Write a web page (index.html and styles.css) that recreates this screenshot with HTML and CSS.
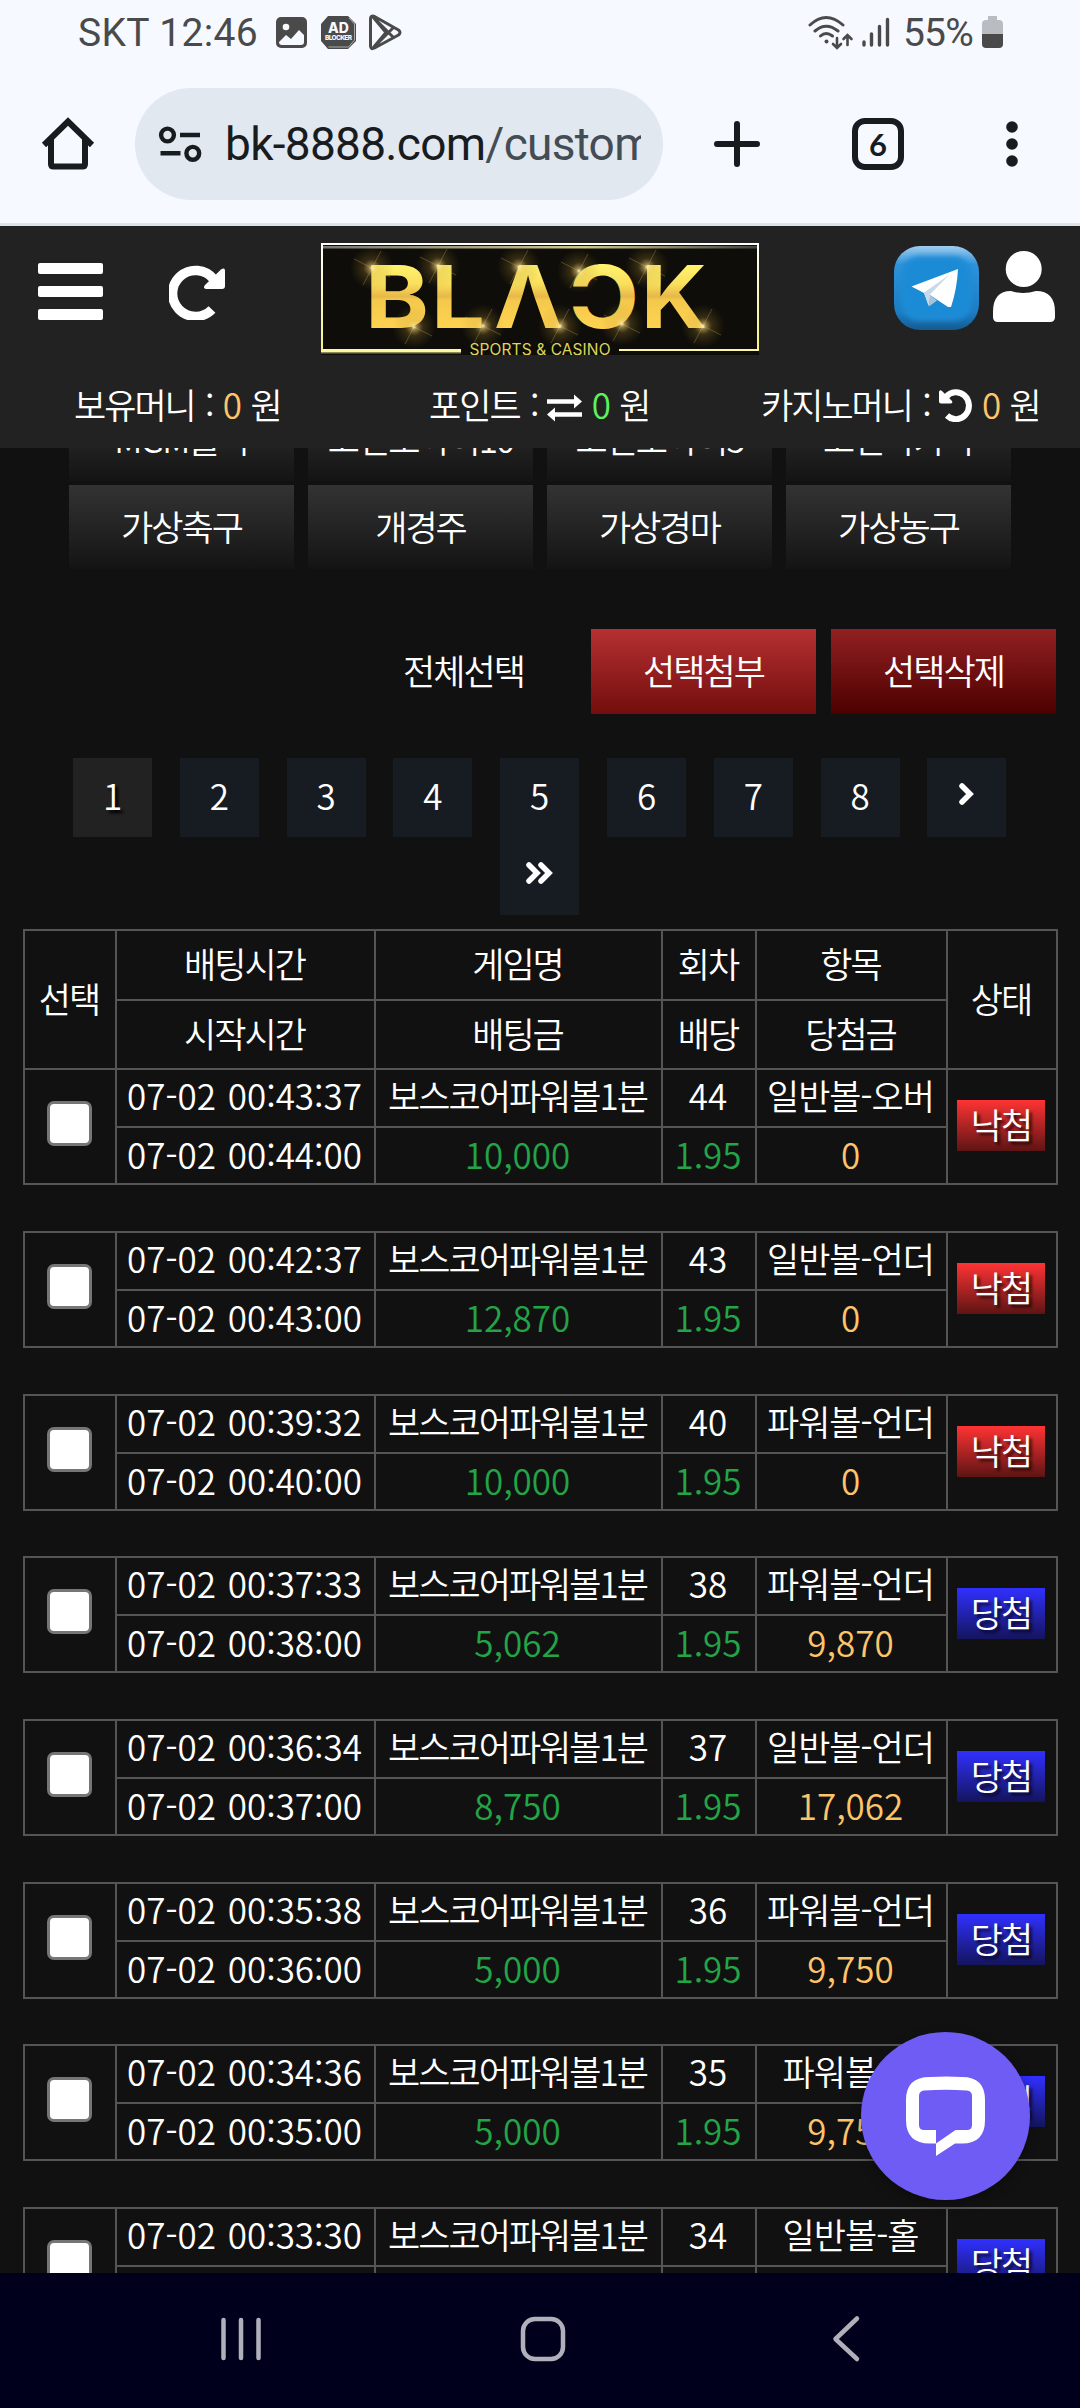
FILE: index.html
```html
<!DOCTYPE html>
<html lang="ko">
	<head>
		<meta charset="utf-8">
		<title>BLACK</title>
		<link rel="stylesheet" href="styles.css">
	</head>
	<body>
		<div class="status">
			<span class="carrier">SKT 12:46</span>
			<svg class="st-left" width="128" height="38" viewBox="275 14 128 38">
				<rect x="276" y="17" width="31" height="31" rx="5" fill="#4a4a4a"/>
				<circle cx="286" cy="27" r="3.3" fill="#f6f9ff"/>
				<path d="M279 42l7-7 5 4 8-9 5 5v7q0 3-3 3h-19q-3 0-3-3z" fill="#f6f9ff"/>
				<path d="M328 16h20l8 8v17l-8 8h-20l-7-8V24z" fill="#4a4a4a"/>
				<path d="M349 18l5.500 6v16l-6 7h-20" fill="none" stroke="#aaa" stroke-width="1"/>
				<text x="338.500" y="32.500" class="ad">AD</text>
				<text x="338.500" y="40" class="adb" textLength="27">BLOCKER</text>
				<path d="M370.500 19v27q0 4 4 2l24-13q3-2.500 0-5l-24-13.500q-4-1.500-4 2.500zM373 17l20 20M373 48l20-20M373 17l13 15.500L373 48" fill="none" stroke="#4a4a4a" stroke-width="3" stroke-linejoin="round"/>
			</svg>
			<svg class="st-right" width="84" height="38" viewBox="807 14 84 38" fill="none" stroke="#4a4a4a" stroke-width="3" stroke-linecap="round">
				<path d="M810 25Q826 10 843 25M815 31Q826 21.500 838 31M820.500 36Q826 31 832.500 36"/>
				<circle cx="826.500" cy="41.500" r="2" fill="#4a4a4a" stroke="none"/>
				<path d="M837 38v9.500M833 44l4 4 4-4M847.500 45v-9.500M843.500 39l4-4 4 4" stroke-width="2.600"/>
				<path d="M864 42v3M871.500 34v11M879.500 26.500V45M887.500 19.500V45" stroke-width="3.400"/>
			</svg>
			<span class="pct">55%</span>
			<svg class="batt" width="21" height="32" viewBox="0 0 21 32">
				<path d="M6 0h9v4h2q4 0 4 4v10H0V8q0-4 4-4h2z" fill="#b9bcc1"/>
				<path d="M0 18h21v10q0 4-4 4H4q-4 0-4-4z" fill="#4a4a4a"/>
			</svg>
		</div>
		<div class="toolbar">
			<svg class="home" width="54" height="54" viewBox="41 117 54 54" fill="none" stroke="#181c1f" stroke-width="6">
				<path d="M44 145l24-23.500L92 145" stroke-linejoin="miter"/>
				<path d="M51 139v25q0 2.500 2.500 2.500h29q2.500 0 2.500-2.500v-25"/>
			</svg>
			<div class="omnibox">
				<svg width="44" height="38" viewBox="158 125 44 38" fill="none" stroke="#181c1f" stroke-width="4.400">
					<circle cx="167.500" cy="135" r="6.400"/>
					<circle cx="192.800" cy="153.300" r="6.400"/>
					<path d="M180 135h20M160.500 153.300h20"/>
				</svg>
				<div class="url">bk-8888.com<span>/custom</span></div>
			</div>
			<svg class="plus" width="46" height="46" viewBox="0 0 46 46" stroke="#181c1f" stroke-width="6" stroke-linecap="round">
				<path d="M23 3v40M3 23h40"/>
			</svg>
			<div class="tabcount">6</div>
			<svg class="dots" width="12" height="46" viewBox="0 0 12 46" fill="#181c1f">
				<circle cx="6" cy="6" r="5.800"/><circle cx="6" cy="23" r="5.800"/><circle cx="6" cy="40" r="5.800"/>
			</svg>
		</div>

		<div class="header">
			<div class="top">
				<div class="burger"><i></i><i></i><i></i></div>
				<svg class="reload" width="56" height="56" viewBox="169 264 56 56">
					<path d="M212 309.500A23 23 0 1 1 213.500 279" fill="none" stroke="#fff" stroke-width="9.500"/>
					<path d="M221 269.500q4-2.500 4 1.500V286q0 3-3 3h-16q-3.500-.5-1-4z" fill="#fff"/>
				</svg>
				<svg class="logo" width="438" height="112" viewBox="321 243 438 112">
					<defs>
						<linearGradient id="gold" x1="0" y1="265" x2="0" y2="328" gradientUnits="userSpaceOnUse">
							<stop offset="0" stop-color="#fff36e"/>
							<stop offset=".3" stop-color="#f9df5c"/>
							<stop offset=".5" stop-color="#e8b848"/>
							<stop offset=".56" stop-color="#f4c94c"/>
							<stop offset="1" stop-color="#ffd350"/>
						</linearGradient>
						<linearGradient id="frame" x1="0" y1="0" x2="0" y2="1">
							<stop offset="0" stop-color="#fff"/>
							<stop offset="1" stop-color="#f7f07e"/>
						</linearGradient>
						<linearGradient id="sheen" x1="0" x2="1">
							<stop offset="0" stop-color="#777"/>
							<stop offset=".6" stop-color="#cfc98a"/>
							<stop offset="1" stop-color="#444"/>
						</linearGradient>
						<radialGradient id="glow">
							<stop offset="0" stop-color="#fffbe0"/>
							<stop offset=".12" stop-color="#f5d97a" stop-opacity=".6"/>
							<stop offset=".4" stop-color="#c9a03c" stop-opacity=".22"/>
							<stop offset="1" stop-color="#a07a20" stop-opacity="0"/>
						</radialGradient>
						<g id="spark">
							<circle r="22" fill="url(#glow)"/>
							<path d="M-18-9L18 9M9-17L-9 17" stroke="#e8c870" stroke-opacity=".35" stroke-width=".8"/>
						</g>
					</defs>
					<rect x="321" y="243" width="438" height="112" fill="#0e0d09"/>
					<rect x="323" y="246" width="434" height="2.500" fill="url(#sheen)"/>
					<path d="M321 243h438v108h-2V245H323v106h-2z" fill="url(#frame)"/>
					<path d="M321 349h140v3H321zM619 349h140v2H619z" fill="#fbf7a5"/>
					<path d="M321 352h140v1.500H321z" fill="#8d895b"/>
					<g class="letters" fill="url(#gold)">
						<text x="365" y="328" textLength="64" lengthAdjust="spacingAndGlyphs">B</text>
						<text x="431" y="328" textLength="54" lengthAdjust="spacingAndGlyphs">L</text>
						<text x="494" y="328" textLength="69" lengthAdjust="spacingAndGlyphs">Λ</text>
						<text x="-639" y="328" transform="scale(-1 1)" textLength="70" lengthAdjust="spacingAndGlyphs">C</text>
						<text x="641" y="328" textLength="66" lengthAdjust="spacingAndGlyphs">K</text>
					</g>
					<use href="#spark" x="372" y="268"/><use href="#spark" x="438" y="266"/>
					<use href="#spark" x="519" y="267"/><use href="#spark" x="579" y="271"/>
					<use href="#spark" x="647" y="267"/><use href="#spark" x="414" y="327"/>
					<use href="#spark" x="483" y="326"/><use href="#spark" x="560" y="326"/>
					<use href="#spark" x="622" y="324"/><use href="#spark" x="703" y="326"/>
					<text class="sub" x="469.500" y="354.500" textLength="141">SPORTS &amp; CASINO</text>
				</svg>
				<svg class="telegram" width="85" height="84" viewBox="0 0 85 84">
					<defs>
						<linearGradient id="tgTop" x1="0" y1="0" x2="0" y2="1">
							<stop offset="0" stop-color="#9fcdf0"/>
							<stop offset=".22" stop-color="#2f93da"/>
							<stop offset=".8" stop-color="#1c7cc2"/>
							<stop offset="1" stop-color="#155a8f"/>
						</linearGradient>
						<filter id="soft"><feGaussianBlur stdDeviation="2.500"/></filter>
					</defs>
					<rect width="85" height="84" rx="26" fill="url(#tgTop)"/>
					<rect x="7" y="10" width="71" height="65" rx="19" fill="#1b8bd6" filter="url(#soft)"/>
					<path d="M17.500 40.500L64 23q-1 20-7 38L54 61 36 49 35 60 30 47z" fill="#fff"/>
					<path d="M30 46.500L55 29 36 48.500 34.500 60z" fill="#c7d9ea"/>
					<path d="M36 49l7 5.500-8 6z" fill="#a9c3da"/>
				</svg>
				<svg class="user" width="62" height="78" viewBox="993 245 62 78" fill="#fff">
					<circle cx="1023.700" cy="269" r="18"/>
					<path d="M1011 291q12 4 25 0 19 0 19 21v5q0 5-5 5h-52q-5 0-5-5v-5q0-21 18-21z"/>
				</svg>
			</div>
			<div class="money">
				<div>보유머니 : <b class="gold">0</b> 원</div>
				<div>포인트 : <svg width="35" height="28" viewBox="0 0 35 28" fill="none" stroke="#fff" stroke-width="4.500"><path d="M0 7.500h28M35 20.500H7"/><path d="M27 .500l8 7-8 7zM8 13.500l-8 7 8 7z" fill="#fff" stroke="none"/></svg><b class="lime">0</b> 원</div>
				<div>카지노머니 : <svg width="33" height="33" viewBox="0 0 33 33"><path d="M8 26.500A13 13.500 0 1 0 7 8" fill="none" stroke="#fff" stroke-width="6"/><path d="M0 3q.5-3 3-1l10 10q1 2.500-1.500 2.500H2q-2 0-2-2z" fill="#fff"/></svg><b class="gold">0</b> 원</div>
			</div>
		</div>

		<div class="page">
			<div class="games">
				<a>MGM홀짝</a><a>코인로하이10</a><a>코인로하이5</a><a>코인바카라</a>
				<a>가상축구</a><a>개경주</a><a>가상경마</a><a>가상농구</a>
			</div>
			<div class="actions">
				<a>전체선택</a><a class="attach">선택첨부</a><a class="delete">선택삭제</a>
			</div>
			<div class="pager">
				<a class="on">1</a><a>2</a><a>3</a><a>4</a><a>5</a><a>6</a><a>7</a><a>8</a>
				<a><svg width="16" height="22" viewBox="0 0 16 22"><path d="M3 3l8 8-8 8"/></svg></a>
				<a class="last"><svg width="28" height="22" viewBox="0 0 28 22"><path d="M3 3l8 8-8 8M15 3l8 8-8 8"/></svg></a>
			</div>
			<table class="bets">
				<colgroup>
					<col class="c1"><col class="c2"><col class="c3"><col class="c4"><col class="c5"><col class="c6">
				</colgroup>
				<thead>
					<tr><th rowspan="2">선택</th><th>배팅시간</th><th>게임명</th><th>회차</th><th>항목</th><th rowspan="2">상태</th></tr>
					<tr><th>시작시간</th><th>배팅금</th><th>배당</th><th>당첨금</th></tr>
				</thead>
				<tbody>
					<tr><td rowspan="2"><input type="checkbox"></td><td class="n">07-02 00:43:37</td><td>보스코어파워볼1분</td><td class="n">44</td><td class="item">일반볼-오버</td><td rowspan="2"><span class="lose">낙첨</span></td></tr>
					<tr><td class="n">07-02 00:44:00</td><td class="n green">10,000</td><td class="n green">1.95</td><td class="n gold">0</td></tr>
					<tr class="gap"><td colspan="6"></td></tr>
				</tbody>
				<tbody>
					<tr><td rowspan="2"><input type="checkbox"></td><td class="n">07-02 00:42:37</td><td>보스코어파워볼1분</td><td class="n">43</td><td class="item">일반볼-언더</td><td rowspan="2"><span class="lose">낙첨</span></td></tr>
					<tr><td class="n">07-02 00:43:00</td><td class="n green">12,870</td><td class="n green">1.95</td><td class="n gold">0</td></tr>
					<tr class="gap"><td colspan="6"></td></tr>
				</tbody>
				<tbody>
					<tr><td rowspan="2"><input type="checkbox"></td><td class="n">07-02 00:39:32</td><td>보스코어파워볼1분</td><td class="n">40</td><td class="item">파워볼-언더</td><td rowspan="2"><span class="lose">낙첨</span></td></tr>
					<tr><td class="n">07-02 00:40:00</td><td class="n green">10,000</td><td class="n green">1.95</td><td class="n gold">0</td></tr>
					<tr class="gap"><td colspan="6"></td></tr>
				</tbody>
				<tbody>
					<tr><td rowspan="2"><input type="checkbox"></td><td class="n">07-02 00:37:33</td><td>보스코어파워볼1분</td><td class="n">38</td><td class="item">파워볼-언더</td><td rowspan="2"><span class="win">당첨</span></td></tr>
					<tr><td class="n">07-02 00:38:00</td><td class="n green">5,062</td><td class="n green">1.95</td><td class="n gold">9,870</td></tr>
					<tr class="gap"><td colspan="6"></td></tr>
				</tbody>
				<tbody>
					<tr><td rowspan="2"><input type="checkbox"></td><td class="n">07-02 00:36:34</td><td>보스코어파워볼1분</td><td class="n">37</td><td class="item">일반볼-언더</td><td rowspan="2"><span class="win">당첨</span></td></tr>
					<tr><td class="n">07-02 00:37:00</td><td class="n green">8,750</td><td class="n green">1.95</td><td class="n gold">17,062</td></tr>
					<tr class="gap"><td colspan="6"></td></tr>
				</tbody>
				<tbody>
					<tr><td rowspan="2"><input type="checkbox"></td><td class="n">07-02 00:35:38</td><td>보스코어파워볼1분</td><td class="n">36</td><td class="item">파워볼-언더</td><td rowspan="2"><span class="win">당첨</span></td></tr>
					<tr><td class="n">07-02 00:36:00</td><td class="n green">5,000</td><td class="n green">1.95</td><td class="n gold">9,750</td></tr>
					<tr class="gap"><td colspan="6"></td></tr>
				</tbody>
				<tbody>
					<tr><td rowspan="2"><input type="checkbox"></td><td class="n">07-02 00:34:36</td><td>보스코어파워볼1분</td><td class="n">35</td><td class="item">파워볼-홀</td><td rowspan="2"><span class="win">당첨</span></td></tr>
					<tr><td class="n">07-02 00:35:00</td><td class="n green">5,000</td><td class="n green">1.95</td><td class="n gold">9,750</td></tr>
					<tr class="gap"><td colspan="6"></td></tr>
				</tbody>
				<tbody>
					<tr><td rowspan="2"><input type="checkbox"></td><td class="n">07-02 00:33:30</td><td>보스코어파워볼1분</td><td class="n">34</td><td class="item">일반볼-홀</td><td rowspan="2"><span class="win">당첨</span></td></tr>
					<tr><td class="n"></td><td class="n"></td><td class="n"></td><td class="n"></td></tr>
				</tbody>
			</table>
		</div>

		<div class="chat">
			<svg width="80" height="84" viewBox="0 0 80 84">
				<path fill="#fff" fill-rule="evenodd" d="M24 3Q40 2 56 3Q79 3 79 26V46Q79 69.500 56 69.500H49L30 82V69.500H24Q0 69.500 0 46V26Q0 3 24 3zM18 16.500Q13 17 13 22V51Q13 56 18 56H30V69.500L49.500 56H61Q66 56 66 51V22Q66 17 61 16.500Q40 15 18 16.500z"/>
			</svg>
		</div>

		<div class="nav">
			<svg width="1080" height="135" viewBox="0 2273 1080 135" fill="none" stroke="#b0b0bb" stroke-width="4.500" stroke-linecap="round">
				<path d="M223.500 2320v38M241 2320v38M258.500 2320v38"/>
				<rect x="523" y="2319" width="40" height="40" rx="12"/>
				<path d="M857 2318.500l-21.500 20.500 21.500 20" stroke-linejoin="round"/>
			</svg>
		</div>
	</body>
</html>
```
FILE: styles.css
```css
html, body {
	margin: 0;
}
body {
	display: flex;
	flex-direction: column;
	width: 1080px;
	height: 2408px;
	overflow: hidden;
	background: #111;
	color: #fff;
	font-family: "Noto Sans CJK KR", sans-serif;
	font-size: 35px;
	font-weight: 350;
	letter-spacing: -2px;
}
svg {
	display: block;
	flex: none;
}
a, span {
	white-space: nowrap;
}

/* system bar and browser toolbar */
.status {
	display: flex;
	flex: none;
	box-sizing: border-box;
	height: 66px;
	padding: 14px 77px 0 78px;
	background: #f6f9ff;
	color: #4a4a4a;
	font: 39px/38px Roboto, sans-serif;
	letter-spacing: 0;
}
.carrier {
	width: 197px;
	letter-spacing: .35px;
}
.st-right {
	margin-left: auto;
}
.pct {
	width: 78px;
	margin-left: 12px;
	letter-spacing: -.8px;
}
.batt {
	margin: 2px 0 0 1px;
}
.ad, .adb {
	fill: #f6f9ff;
	text-anchor: middle;
	font: 800 14px Inter, sans-serif;
}
.adb {
	font-size: 6.5px;
}
.toolbar {
	display: flex;
	flex: none;
	align-items: center;
	box-sizing: border-box;
	height: 160px;
	padding: 0 62px 2px 41px;
	border-bottom: 3px solid #dce4e9;
	background: #f6f9ff;
	color: #181c1f;
	letter-spacing: 0;
}
.omnibox {
	display: flex;
	align-items: center;
	box-sizing: border-box;
	width: 529px;
	height: 112px;
	margin: 1px 0 0 40px;
	padding-left: 23px;
	border-radius: 56px;
	background: #e2e8f0;
}
.url {
	width: 416px;
	margin-left: 23px;
	overflow: hidden;
	white-space: nowrap;
	font: 46px/62px Roboto, sans-serif;
	letter-spacing: -.7px;
}
.url span {
	color: #444c54;
}
.plus {
	margin-left: 51px;
}
.tabcount {
	box-sizing: border-box;
	width: 52px;
	height: 52px;
	margin-left: 92px;
	border: 6px solid #181c1f;
	border-radius: 13px;
	text-align: center;
	font: 700 31px/41px Lato, sans-serif;
}
.dots {
	margin-left: 102px;
}

/* site header */
.header {
	z-index: 1;
	flex: none;
	height: 222px;
	background: #222;
}
.top {
	display: flex;
	height: 138px;
	padding-left: 38px;
}
.burger {
	display: grid;
	gap: 12px;
	align-content: start;
	width: 65px;
	margin-top: 37px;
}
.burger i {
	height: 11px;
	border-radius: 2px;
	background: #fff;
}
.reload {
	margin: 38px 0 0 66px;
}
.logo {
	margin: 17px 0 0 96px;
}
.letters {
	font: 700 86px Inter, sans-serif;
	letter-spacing: 0;
}
.sub {
	fill: #dcd65a;
	font: 400 15.5px Inter, sans-serif;
	letter-spacing: 0;
}
.telegram {
	margin: 20px 0 0 135px;
}
.user {
	margin: 19px 0 0 14px;
}
.money {
	display: grid;
	grid-template-columns: 355px 332px auto;
	height: 84px;
	padding-left: 74px;
}
.money div {
	margin-top: -2px;
	white-space: pre;
	line-height: 84px;
	word-spacing: 2.5px;
}
.money svg {
	display: inline-block;
	margin: 0 10px 0 -1px;
	vertical-align: -3px;
}
b {
	font-weight: 350;
}
.gold {
	color: #fdc56b;
}
.lime {
	color: #5cf25c;
}

/* betting history */
.page {
	flex: 1;
	min-height: 0;
	overflow: hidden;
}
.games {
	display: grid;
	grid-template-columns: repeat(4, 225px);
	gap: 4px 14px;
	margin: -51px 0 0 69px;
}
.games a, .actions a {
	height: 84px;
	text-align: center;
	line-height: 82px;
}
.games a {
	background: linear-gradient(#333, #141414);
}
.actions {
	display: flex;
	justify-content: flex-end;
	gap: 15px;
	margin: 60px 24px 0 0;
}
.actions a {
	width: 225px;
	height: 85px;
}
.actions .attach {
	background: linear-gradient(#b63031, #730d0d);
}
.actions .delete {
	background: linear-gradient(#922021, #4c0000);
}
.pager {
	display: grid;
	grid-template-columns: repeat(9, 79px);
	grid-auto-rows: 78px;
	column-gap: 27.8px;
	margin: 44px 0 0 73px;
}
.pager a {
	height: 79px;
	background: #171c23;
	text-align: center;
	line-height: 74px;
	letter-spacing: 0;
}
.pager .on {
	background: #222;
	text-shadow: 3px 3px 3px #000;
}
.pager .last {
	grid-column: 5;
}
.pager svg {
	margin: 25px auto 0;
	fill: none;
	stroke: #fff;
	stroke-width: 5.5;
	stroke-linecap: round;
}
.pager .last svg {
	margin-top: 26px;
}
.bets {
	width: 1035px;
	margin: 15px 0 0 23px;
	border-collapse: collapse;
	table-layout: fixed;
	text-align: center;
	line-height: 48px;
}
.c1 { width: 92px; }
.c2 { width: 259px; }
.c3 { width: 287px; }
.c4 { width: 94px; }
.c5 { width: 191px; }
.c6 { width: 110px; }
.bets th, .bets td {
	height: 57px;
	box-sizing: border-box;
	padding: 0 2px 4px 0;
	border: 2px solid #555;
	font-weight: 350;
	white-space: nowrap;
}
.bets th {
	height: 69px;
}
.bets tbody tr:first-child td {
	height: 58px;
	padding-bottom: 7px;
}
.bets thead tr:first-child th {
	height: 70px;
}
.bets .gap td {
	height: 48px;
	border-width: 2px 0;
	line-height: 0;
}
.bets tbody:nth-of-type(3n) .gap td {
	height: 47px;
}
.bets .n {
	letter-spacing: 0;
	word-spacing: 2px;
}
.bets .item {
	letter-spacing: -1px;
}
.bets .green {
	color: #22a447;
}
.bets .gold {
	color: #fdc56b;
}
.bets input {
	display: block;
	appearance: none;
	box-sizing: border-box;
	width: 45px;
	height: 45px;
	margin: 1px auto 0;
	border: 3px solid #767676;
	border-radius: 7px;
	background: #fff;
}
.lose, .win {
	display: block;
	width: 88px;
	height: 51px;
	margin: 5px auto 0;
	line-height: 47px;
	text-shadow: 3px 3px 3px rgba(0, 0, 0, .7);
}
.lose {
	background: linear-gradient(#ff3334, #5e1414);
}
.win {
	background: linear-gradient(#3030ff, #14145e);
}

/* floating chat launcher */
.chat {
	position: absolute;
	top: 2032px;
	left: 861px;
	z-index: 2;
	display: grid;
	place-items: center;
	width: 169px;
	height: 168px;
	border-radius: 50%;
	background: #6f5cf4;
	box-shadow: 0 4px 12px rgba(0, 0, 0, .3);
}

.nav {
	z-index: 1;
	flex: none;
	height: 135px;
	background: #00001c;
}
```
